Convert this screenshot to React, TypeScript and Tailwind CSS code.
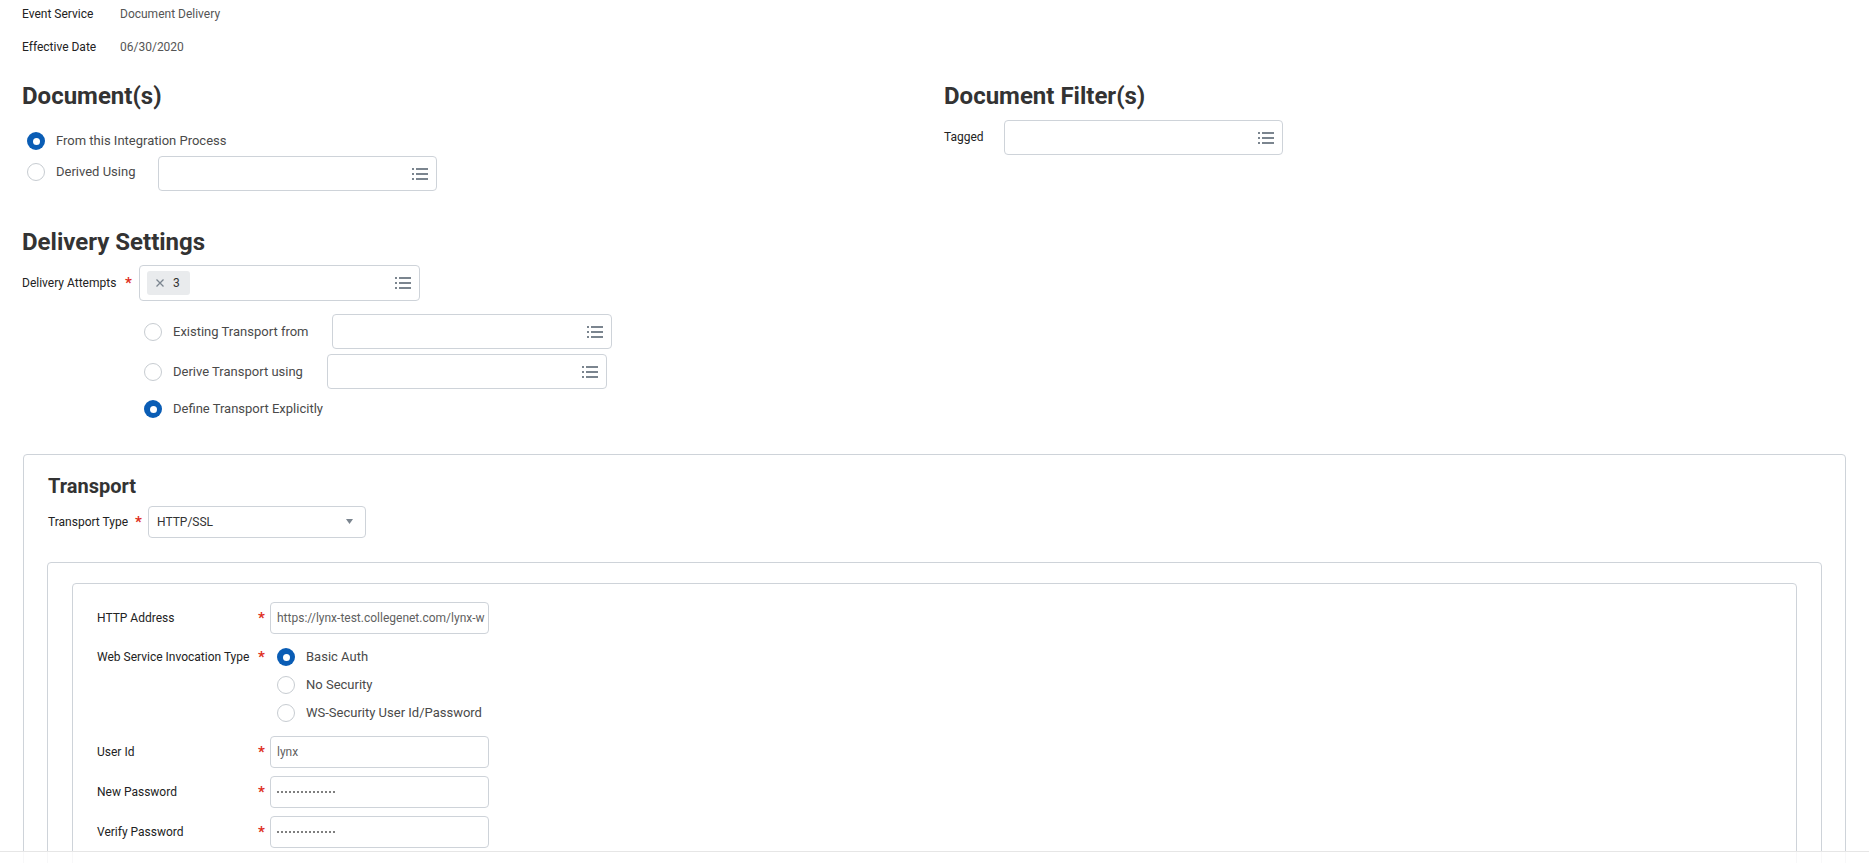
import React from "react";

const font = { fontFamily: "Roboto, 'Noto Sans', Arial, sans-serif" };

function ListIcon() {
  return (
    <svg width="16" height="12" viewBox="0 0 16 12" className="shrink-0 text-[#7b858f]" fill="currentColor">
      <rect x="0" y="0" width="2" height="2" />
      <rect x="4" y="0" width="12" height="2" />
      <rect x="0" y="5" width="2" height="2" />
      <rect x="4" y="5" width="12" height="2" />
      <rect x="0" y="10" width="2" height="2" />
      <rect x="4" y="10" width="12" height="2" />
    </svg>
  );
}

function Radio({ on }: { on?: boolean }) {
  return on ? (
    <span className="flex h-[18px] w-[18px] shrink-0 items-center justify-center rounded-full bg-[#0a5db5]">
      <span className="h-[7px] w-[7px] rounded-full bg-white" />
    </span>
  ) : (
    <span className="h-[18px] w-[18px] shrink-0 rounded-full border border-[#c7ccd1] bg-white" />
  );
}

function Star() {
  return <span className="text-[15px] font-bold leading-none text-[#de2e21]">*</span>;
}

function Prompt({ w, h = "h-[35px]", children }: { w: string; h?: string; children?: React.ReactNode }) {
  return (
    <div className={`flex ${w} ${h} shrink-0 items-center justify-between rounded-[4px] border border-[#ced3d9] bg-white pl-[7px] pr-[8px]`}>
      <div className="flex items-center">{children}</div>
      <ListIcon />
    </div>
  );
}

function TextBox({ children }: { children?: React.ReactNode }) {
  return (
    <div className="flex h-[32px] w-[219px] items-center overflow-hidden whitespace-nowrap rounded-[4px] border border-[#ced3d9] bg-white pl-[6px] text-[12px] text-[#5f5f5f]">
      {children}
    </div>
  );
}

function Dots() {
  return (
    <div className="flex gap-[2px]">
      {Array.from({ length: 15 }).map((_, i) => (
        <span key={i} className="h-[2px] w-[2px] rounded-full bg-[#555]" />
      ))}
    </div>
  );
}

function FieldRow({ label, children, className = "" }: { label: string; children: React.ReactNode; className?: string }) {
  return (
    <div className={`flex h-[32px] items-center ${className}`}>
      <span className="w-[161px] text-[12px] text-[#222]">{label}</span>
      <span className="w-[12px]"><Star /></span>
      {children}
    </div>
  );
}

export default function App() {
  return (
    <div className="relative h-[863px] overflow-hidden bg-white text-[#333]" style={font}>
      <div className="px-[22px] pt-[6px]">
        <div className="flex h-4 items-center text-[12px]">
          <span className="w-[98px] text-[#222]">Event Service</span>
          <span className="text-[#555]">Document Delivery</span>
        </div>
        <div className="mt-[17px] flex h-4 items-center text-[12px]">
          <span className="w-[98px] text-[#222]">Effective Date</span>
          <span className="text-[#555]">06/30/2020</span>
        </div>

        <div className="mt-[27px] flex">
          <div className="w-[922px]">
            <h2 className="text-[24px] font-bold leading-[28px]">Document(s)</h2>
            <div className="mt-[21px] flex h-5 items-center pl-[5px]">
              <Radio on />
              <span className="ml-[11px] text-[13px] text-[#4a4a4a]">From this Integration Process</span>
            </div>
            <div className="mt-[5px] flex items-start pl-[5px]">
              <div className="flex h-[31px] items-center">
                <Radio />
                <span className="ml-[11px] w-[102px] text-[13px] text-[#4a4a4a]">Derived Using</span>
              </div>
              <Prompt w="w-[279px]" />
            </div>
          </div>
          <div>
            <h2 className="text-[24px] font-bold leading-[28px]">Document Filter(s)</h2>
            <div className="mt-[10px] flex items-start">
              <span className="flex h-[33px] w-[60px] items-center text-[12px] text-[#222]">Tagged</span>
              <Prompt w="w-[279px]" />
            </div>
          </div>
        </div>

        <h2 className="mt-[37px] text-[24px] font-bold leading-[28px]">Delivery Settings</h2>
        <div className="mt-[9px] flex h-[36px] items-center">
          <span className="w-[103px] text-[12px] text-[#222]">Delivery Attempts</span>
          <span className="w-[14px]"><Star /></span>
          <Prompt w="w-[281px]" h="h-[36px]">
            <span className="flex h-[24px] w-[43px] items-center gap-[9px] rounded-[3px] bg-[#e9ebed] px-[9px] text-[12px]">
              <svg width="8" height="8" viewBox="0 0 8 8" className="text-[#7b858f]" stroke="currentColor" strokeWidth="1.3">
                <path d="M0.5 0.5l7 7M7.5 0.5l-7 7" />
              </svg>
              <span className="text-[#333]">3</span>
            </span>
          </Prompt>
        </div>

        <div className="ml-[122px]">
          <div className="mt-[13px] flex h-[35px] items-center">
            <Radio />
            <span className="ml-[11px] w-[159px] text-[13px] text-[#4a4a4a]">Existing Transport from</span>
            <Prompt w="w-[280px]" />
          </div>
          <div className="mt-[5px] flex h-[35px] items-center">
            <Radio />
            <span className="ml-[11px] w-[154px] text-[13px] text-[#4a4a4a]">Derive Transport using</span>
            <Prompt w="w-[280px]" />
          </div>
          <div className="mt-[10px] flex h-5 items-center">
            <Radio on />
            <span className="ml-[11px] text-[13px] text-[#4a4a4a]">Define Transport Explicitly</span>
          </div>
        </div>

        <div className="mx-[1px] mt-[35px] rounded-[4px] border border-[#ced3d9] px-[23px] pt-[19px] pb-[40px]">
          <h3 className="ml-[1px] text-[20px] font-bold leading-[24px]">Transport</h3>
          <div className="ml-[1px] mt-[8px] flex h-[32px] items-center">
            <span className="w-[87px] text-[12px] text-[#222]">Transport Type</span>
            <span className="w-[13px]"><Star /></span>
            <div className="flex h-[32px] w-[218px] items-start justify-between rounded-[4px] border border-[#ced3d9] pl-[8px] pr-[12px] pt-[6px]">
              <span className="text-[12px] text-[#333]">HTTP/SSL</span>
              <svg width="7" height="5" viewBox="0 0 7 5" className="mt-[6px] text-[#7b858f]" fill="currentColor">
                <path d="M0 0h7L3.5 5z" />
              </svg>
            </div>
          </div>

          <div className="mt-[24px] rounded-[4px] border border-[#ced3d9] px-[24px] pt-[20px] pb-[40px]">
            <div className="rounded-[4px] border border-[#ced3d9] px-[24px] pt-[18px] pb-[40px]">
              <FieldRow label="HTTP Address">
                <TextBox>https://lynx-test.collegenet.com/lynx-w</TextBox>
              </FieldRow>

              <div className="mt-[9px] flex">
                <span className="flex h-[28px] w-[161px] items-center text-[12px] text-[#222]">Web Service Invocation Type</span>
                <span className="flex h-[28px] w-[12px] items-center"><Star /></span>
                <div className="pl-[7px]">
                  {[
                    ["Basic Auth", true],
                    ["No Security", false],
                    ["WS-Security User Id/Password", false],
                  ].map(([t, on]) => (
                    <div key={t as string} className="flex h-[28px] items-center">
                      <Radio on={on as boolean} />
                      <span className="ml-[11px] text-[13px] text-[#4a4a4a]">{t as string}</span>
                    </div>
                  ))}
                </div>
              </div>

              <FieldRow label="User Id" className="mt-[9px]">
                <TextBox>lynx</TextBox>
              </FieldRow>
              <FieldRow label="New Password" className="mt-[8px]">
                <TextBox><Dots /></TextBox>
              </FieldRow>
              <FieldRow label="Verify Password" className="mt-[8px]">
                <TextBox><Dots /></TextBox>
              </FieldRow>
            </div>
          </div>
        </div>
      </div>

      <div className="absolute inset-x-0 bottom-0 h-[12px] border-t border-[#e6e6e6] bg-white/85" />
    </div>
  );
}
